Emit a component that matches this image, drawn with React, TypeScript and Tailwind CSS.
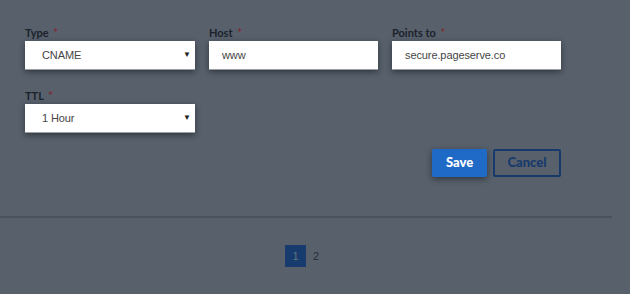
import React from "react";

const labelCls = "h-[13px] text-[11px] leading-[13px] font-bold text-[#1b222b] mb-[2px]";

function Label({ text }: { text: string }) {
  return (
    <div className={labelCls} style={{ fontFamily: "Lato, 'Open Sans', sans-serif" }}>
      {text} <span className="text-[#7d2f38] ml-[2px]">*</span>
    </div>
  );
}

function Select({ value }: { value: string }) {
  return (
    <div className="w-[170px] h-[29px] bg-white flex items-center justify-between pl-[17px] pr-[4px] shadow-[0_2px_6px_rgba(0,0,0,0.45)] border-b border-[#9aa0a6]">
      <span className="text-[11px] tracking-[-0.1px] text-[#454545]">{value}</span>
      <span className="text-[8px] text-[#222]">▼</span>
    </div>
  );
}

function Input({ value }: { value: string }) {
  return (
    <div className="w-[169px] h-[29px] bg-white flex items-center pl-[13px] shadow-[0_2px_6px_rgba(0,0,0,0.45)] border-b border-[#9aa0a6]">
      <span className="text-[11px] tracking-[-0.1px] text-[#454545]">{value}</span>
    </div>
  );
}

export default function App() {
  return (
    <div
      className="w-[630px] h-[294px] bg-[#57606b] overflow-hidden flex flex-col"
      style={{ fontFamily: "'Liberation Sans', Arial, sans-serif" }}
    >
      <div className="pl-[25px] pt-[26px]">
        <div className="flex gap-[14px]">
          <div>
            <Label text="Type" />
            <Select value="CNAME" />
          </div>
          <div>
            <Label text="Host" />
            <Input value="www" />
          </div>
          <div>
            <Label text="Points to" />
            <Input value="secure.pageserve.co" />
          </div>
        </div>

        <div className="mt-[19px]">
          <Label text="TTL" />
          <Select value="1 Hour" />
        </div>

        <div className="w-[536px] flex justify-end gap-[6px] mt-[16px]">
          <button
            className="w-[55px] h-[28px] bg-[#1f6ac6] text-white text-[13px] font-black rounded-[2px] shadow-[0_2px_6px_rgba(0,0,0,0.45)]"
            style={{ fontFamily: "Lato, sans-serif" }}
          >
            Save
          </button>
          <button
            className="w-[68px] h-[28px] border-2 border-[#173a6b] text-[#173a6b] text-[13px] font-black rounded-[2px]"
            style={{ fontFamily: "Lato, sans-serif" }}
          >
            Cancel
          </button>
        </div>
      </div>

      <div className="mt-[39px] w-[612px] h-[2px] bg-[#4a525c]" />

      <div className="mt-[27px] w-[604px] flex justify-center items-center gap-[7px]">
        <div className="w-[21px] h-[22px] bg-[#173b6c] flex items-center justify-center text-[11px] text-[#66727f]">
          1
        </div>
        <div className="text-[11px] text-[#2a3038]">2</div>
      </div>
    </div>
  );
}
